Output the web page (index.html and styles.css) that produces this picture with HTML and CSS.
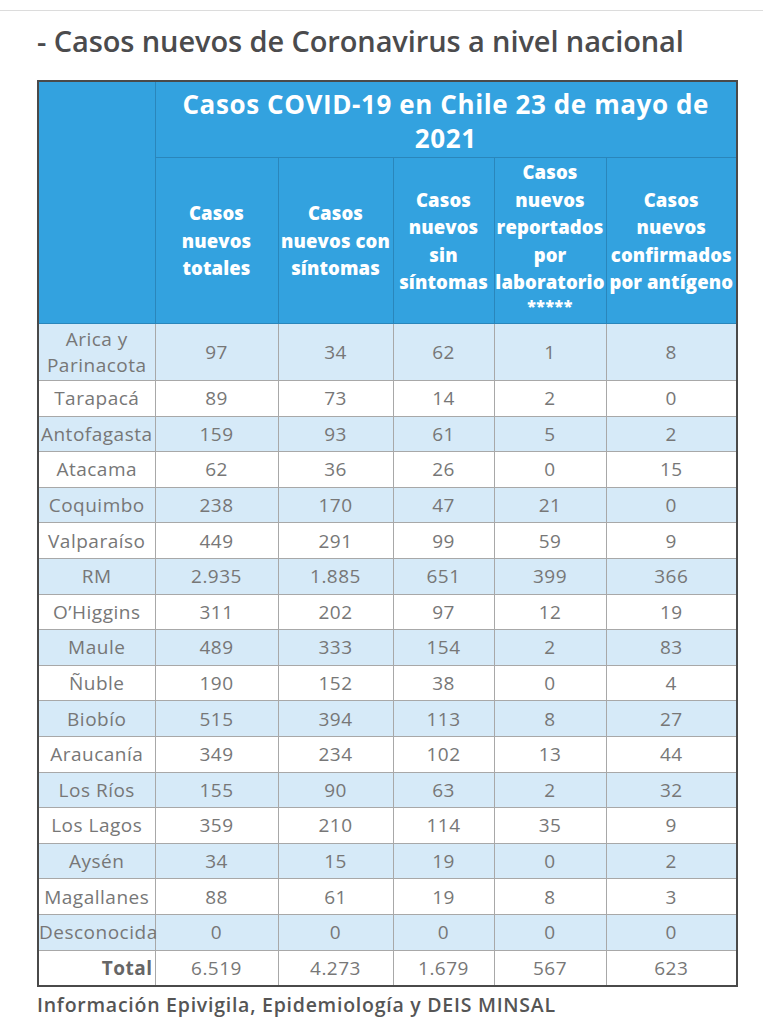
FILE: index.html
```html
<!DOCTYPE html>
<html lang="es">
<head>
<meta charset="utf-8">
<title>Casos nuevos de Coronavirus a nivel nacional</title>
<link rel="stylesheet" href="styles.css">
</head>
<body>
<div class="topline"></div>
<main class="content">
  <h2 class="title">- Casos nuevos de Coronavirus a nivel nacional</h2>
  <table class="covid">
    <colgroup>
      <col class="c1"><col class="c2"><col class="c3"><col class="c4"><col class="c5"><col class="c6">
    </colgroup>
    <thead>
      <tr class="h1">
        <th rowspan="2" class="blank"></th>
        <th colspan="5" class="big">Casos COVID-19 en Chile 23 de mayo de 2021</th>
      </tr>
      <tr class="h2">
        <th>Casos<br>nuevos<br>totales</th>
        <th>Casos<br>nuevos con<br>síntomas</th>
        <th>Casos<br>nuevos<br>sin<br>síntomas</th>
        <th>Casos<br>nuevos<br>reportados<br>por<br>laboratorio<br><span class="stars">*****</span></th>
        <th>Casos<br>nuevos<br>confirmados<br>por antígeno</th>
      </tr>
    </thead>
    <tbody>
      <tr class="odd tall"><td>Arica y<br>Parinacota</td><td>97</td><td>34</td><td>62</td><td>1</td><td>8</td></tr>
      <tr><td>Tarapacá</td><td>89</td><td>73</td><td>14</td><td>2</td><td>0</td></tr>
      <tr class="odd"><td>Antofagasta</td><td>159</td><td>93</td><td>61</td><td>5</td><td>2</td></tr>
      <tr><td>Atacama</td><td>62</td><td>36</td><td>26</td><td>0</td><td>15</td></tr>
      <tr class="odd"><td>Coquimbo</td><td>238</td><td>170</td><td>47</td><td>21</td><td>0</td></tr>
      <tr><td>Valparaíso</td><td>449</td><td>291</td><td>99</td><td>59</td><td>9</td></tr>
      <tr class="odd"><td>RM</td><td>2.935</td><td>1.885</td><td>651</td><td>399</td><td>366</td></tr>
      <tr><td>O’Higgins</td><td>311</td><td>202</td><td>97</td><td>12</td><td>19</td></tr>
      <tr class="odd"><td>Maule</td><td>489</td><td>333</td><td>154</td><td>2</td><td>83</td></tr>
      <tr><td>Ñuble</td><td>190</td><td>152</td><td>38</td><td>0</td><td>4</td></tr>
      <tr class="odd"><td>Biobío</td><td>515</td><td>394</td><td>113</td><td>8</td><td>27</td></tr>
      <tr><td>Araucanía</td><td>349</td><td>234</td><td>102</td><td>13</td><td>44</td></tr>
      <tr class="odd"><td>Los Ríos</td><td>155</td><td>90</td><td>63</td><td>2</td><td>32</td></tr>
      <tr><td>Los Lagos</td><td>359</td><td>210</td><td>114</td><td>35</td><td>9</td></tr>
      <tr class="odd"><td>Aysén</td><td>34</td><td>15</td><td>19</td><td>0</td><td>2</td></tr>
      <tr><td>Magallanes</td><td>88</td><td>61</td><td>19</td><td>8</td><td>3</td></tr>
      <tr class="odd"><td>Desconocida</td><td>0</td><td>0</td><td>0</td><td>0</td><td>0</td></tr>
      <tr class="total"><td class="label">Total</td><td>6.519</td><td>4.273</td><td>1.679</td><td>567</td><td>623</td></tr>
    </tbody>
  </table>
  <p class="source">Información Epivigila, Epidemiología y DEIS MINSAL</p>
</main>
</body>
</html>
```

FILE: styles.css
```css
html, body {
  margin: 0;
  padding: 0;
  background: #ffffff;
}

body {
  font-family: "Open Sans", "Noto Sans", sans-serif;
  color: #666;
}

.topline {
  height: 10px;
  border-bottom: 1px solid #dcdcdc;
}

.content {
  padding: 0 0 0 37px;
}

.title {
  margin: 10px 0 19px 0;
  font-size: 29px;
  line-height: 40px;
  height: 40px;
  font-weight: 600;
  color: #4b4b4d;
  letter-spacing: -0.1px;
  white-space: nowrap;
}

.covid {
  width: 699px;
  border-collapse: collapse;
  table-layout: fixed;
  border: 2px solid #4a4a4a;
}

.c1 { width: 117px; }
.c2 { width: 123px; }
.c3 { width: 115px; }
.c4 { width: 101px; }
.c5 { width: 112px; }
.c6 { width: 131px; }

.covid th {
  background: #33a2df;
  color: #ffffff;
  font-weight: 700;
  border: 1px solid #2a86bb;
  padding: 0;
  text-align: center;
  vertical-align: middle;
}

.covid .h1 th.big {
  height: 73px;
  font-size: 26px;
  line-height: 34px;
  letter-spacing: 0.6px;
  padding: 2px 20px 0 20px;
}

.covid .h2 th {
  height: 165px;
  font-size: 18.5px;
  font-weight: 800;
  line-height: 27.5px;
  letter-spacing: 0.1px;
  white-space: nowrap;
}

.stars {
  display: inline-block;
  font-size: 16px;
  line-height: 16px;
  letter-spacing: 0.5px;
  vertical-align: top;
  padding-top: 2px;
}

.covid td {
  height: 34.6px;
  padding: 0;
  border: 1px solid #a8a8a8;
  text-align: center;
  vertical-align: middle;
  font-size: 19px;
  line-height: 26px;
  color: #777777;
  letter-spacing: 0.5px;
  white-space: nowrap;
}

.covid tr.tall td {
  height: 56px;
}

.covid tr.odd td {
  background: #d6eaf8;
}

.covid tr.total td.label {
  text-align: right;
  font-weight: 700;
  color: #666;
  padding-right: 2px;
}

.source {
  margin: 4px 0 0 0;
  font-size: 19.5px;
  line-height: 28px;
  font-weight: 600;
  color: #555;
  letter-spacing: 0.75px;
}
```
